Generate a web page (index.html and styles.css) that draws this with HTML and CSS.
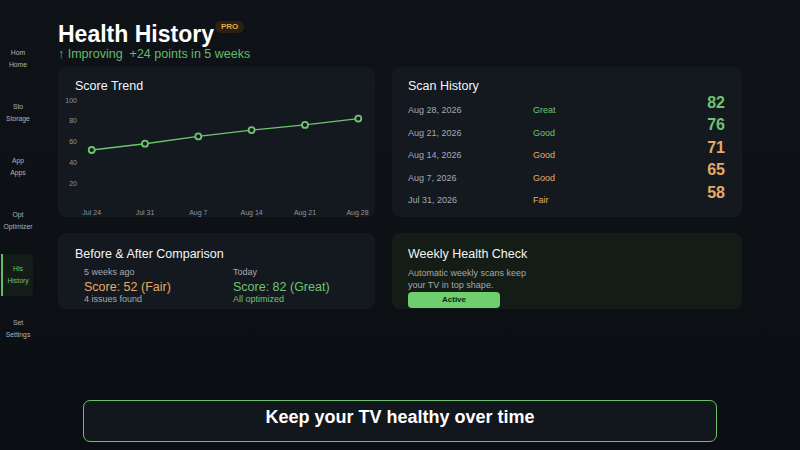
FILE: index.html
```html
<!DOCTYPE html>
<html lang="en">
<head>
  <meta charset="UTF-8">
  <title>Health History</title>
  <link rel="stylesheet" href="styles.css">
</head>
<body>

<div class="app">
  <nav class="sidebar">
    <div class="nav-item"><span>Hom</span><span>Home</span></div>
    <div class="nav-item"><span>Sto</span><span>Storage</span></div>
    <div class="nav-item"><span>App</span><span>Apps</span></div>
    <div class="nav-item"><span>Opt</span><span>Optimizer</span></div>
    <div class="nav-item active"><span>His</span><span>History</span></div>
    <div class="nav-item"><span>Set</span><span>Settings</span></div>
  </nav>

  <main class="main">
    <div class="title-row">
      <h1>Health History</h1>
      <span class="pro">PRO</span>
    </div>
    <div class="subtitle">
      <span>↑ Improving</span>
      <span>+24 points in 5 weeks</span>
    </div>

    <div class="grid">
      <section class="card">
        <h2 class="card-title">Score Trend</h2>
        <svg class="chart" width="317" height="123" viewBox="0 0 317 123">
          <g class="axis">
            <text x="19" y="8.5" text-anchor="end">100</text>
            <text x="19" y="29.2" text-anchor="end">80</text>
            <text x="19" y="49.8" text-anchor="end">60</text>
            <text x="19" y="70.8" text-anchor="end">40</text>
            <text x="19" y="92" text-anchor="end">20</text>
            <text x="33.7" y="120.5" text-anchor="middle">Jul 24</text>
            <text x="87" y="120.5" text-anchor="middle">Jul 31</text>
            <text x="140.3" y="120.5" text-anchor="middle">Aug 7</text>
            <text x="193.6" y="120.5" text-anchor="middle">Aug 14</text>
            <text x="247" y="120.5" text-anchor="middle">Aug 21</text>
            <text x="299.5" y="120.5" text-anchor="middle">Aug 28</text>
          </g>
          <polyline class="line" points="33.7,56 87,49.7 140.3,42.4 193.6,36.1 247,30.9 300.3,24.6"/>
          <g class="dots">
            <circle cx="33.7" cy="56" r="3"/>
            <circle cx="87" cy="49.7" r="3"/>
            <circle cx="140.3" cy="42.4" r="3"/>
            <circle cx="193.6" cy="36.1" r="3"/>
            <circle cx="247" cy="30.9" r="3"/>
            <circle cx="300.3" cy="24.6" r="3"/>
          </g>
        </svg>
      </section>

      <section class="card scan">
        <h2 class="card-title">Scan History</h2>
        <div class="scan-row">
          <span class="date">Aug 28, 2026</span>
          <span class="status green">Great</span>
          <span class="score green">82</span>
        </div>
        <div class="scan-row">
          <span class="date">Aug 21, 2026</span>
          <span class="status green">Good</span>
          <span class="score green">76</span>
        </div>
        <div class="scan-row">
          <span class="date">Aug 14, 2026</span>
          <span class="status orange">Good</span>
          <span class="score orange">71</span>
        </div>
        <div class="scan-row">
          <span class="date">Aug 7, 2026</span>
          <span class="status orange">Good</span>
          <span class="score orange">65</span>
        </div>
        <div class="scan-row">
          <span class="date">Jul 31, 2026</span>
          <span class="status orange">Fair</span>
          <span class="score orange">58</span>
        </div>
      </section>

      <section class="card compare">
        <h2 class="card-title">Before &amp; After Comparison</h2>
        <div class="compare-cols">
          <div>
            <div class="when">5 weeks ago</div>
            <div class="big orange">Score: 52 (Fair)</div>
            <div class="note">4 issues found</div>
          </div>
          <div>
            <div class="when">Today</div>
            <div class="big green">Score: 82 (Great)</div>
            <div class="note green">All optimized</div>
          </div>
        </div>
      </section>

      <section class="card weekly">
        <h2 class="card-title">Weekly Health Check</h2>
        <p class="desc">Automatic weekly scans keep your TV in top shape.</p>
        <div class="active-btn">Active</div>
      </section>
    </div>
  </main>

  <div class="banner">Keep your TV healthy over time</div>
</div>

</body>
</html>
```

FILE: styles.css
```css
body {
  margin: 0;
  font-family: 'Liberation Sans', Arial, sans-serif;
  background: #0c1015;
  color: #f0f2f4;
}

.app {
  position: relative;
  display: flex;
  width: 800px;
  height: 450px;
  overflow: hidden;
  background: linear-gradient(180deg, #0f1318 0%, #0b0e12 100%);
}

.sidebar {
  width: 42px;
  flex-shrink: 0;
  padding-top: 38px;
  display: flex;
  flex-direction: column;
  gap: 12px;
}

.nav-item {
  width: 30px;
  height: 42px;
  margin-left: 1px;
  border-left: 2px solid transparent;
  border-radius: 0 4px 4px 0;
  display: flex;
  flex-direction: column;
  align-items: center;
  justify-content: center;
  font-size: 6.8px;
  line-height: 12px;
  color: #aeb3b9;
}

.nav-item.active {
  border-left-color: #66bb6a;
  background: #141c17;
  color: #6fc46f;
}

.main {
  flex: 1;
  padding: 22px 58px 0 16px;
}

.title-row {
  display: flex;
  align-items: flex-start;
}

h1 {
  margin: 0;
  font-size: 23px;
  line-height: 24px;
  font-weight: bold;
  color: #ffffff;
}

.pro {
  margin: -1px 0 0 1px;
  padding: 0 6px;
  height: 12px;
  line-height: 12px;
  border-radius: 6px;
  background: #2a2112;
  color: #e5a54a;
  font-size: 8px;
  font-weight: bold;
}

.subtitle {
  display: flex;
  gap: 7px;
  margin-top: 1px;
  font-size: 12.5px;
  line-height: 14px;
  color: #66bb6a;
}

.grid {
  margin-top: 6px;
  display: grid;
  grid-template-columns: 317px 350px;
  grid-template-rows: 150px 76px;
  column-gap: 17px;
  row-gap: 16px;
}

.card {
  background: #141920;
  border-radius: 8px;
  overflow: hidden;
}

.card-title {
  margin: 0;
  padding: 12px 17px 0;
  font-size: 12.5px;
  line-height: 15px;
  font-weight: normal;
  color: #f4f5f6;
}

.compare .card-title,
.weekly .card-title {
  padding-top: 13.5px;
}

.chart {
  display: block;
}

.axis text {
  font-family: 'Liberation Sans', Arial, sans-serif;
  font-size: 7px;
  fill: #8f959c;
}

.line {
  fill: none;
  stroke: #6fc46f;
  stroke-width: 1.4;
}

.dots circle {
  fill: #141920;
  stroke: #6fc46f;
  stroke-width: 1.8;
}

.green {
  color: #6fc46f;
}

.orange {
  color: #e8a964;
}

.scan .card-title {
  padding-left: 16px;
  margin-bottom: 5px;
}

.scan-row {
  display: flex;
  align-items: center;
  height: 22.5px;
  padding: 0 17px 0 16px;
  font-size: 9px;
}

.date {
  width: 125px;
  color: #a3a9b0;
}

.status {
  flex: 1;
}

.score {
  margin-top: -15px;
  font-size: 16px;
  line-height: 16px;
  font-weight: bold;
}

.compare-cols {
  display: grid;
  grid-template-columns: 149px 1fr;
  margin: 5px 0 0 26px;
}

.when {
  font-size: 9px;
  line-height: 11px;
  color: #a3a9b0;
}

.big {
  margin-top: 3.5px;
  font-size: 12.5px;
  line-height: 13px;
}

.note {
  font-size: 9px;
  line-height: 10px;
  color: #a3a9b0;
}

.note.green {
  color: #6fc46f;
}

.weekly {
  background: #131c15;
}

.weekly .card-title {
  padding-left: 16px;
}

.desc {
  margin: 5.5px 0 0 16px;
  max-width: 130px;
  font-size: 9px;
  line-height: 12px;
  color: #a3a9b0;
}

.active-btn {
  margin: 0.5px 0 0 16px;
  width: 92px;
  height: 16px;
  line-height: 16px;
  border-radius: 4px;
  background: #6fcf6f;
  color: #0d1a0d;
  font-size: 8px;
  font-weight: 600;
  text-align: center;
}

/* caption laid over the page */
.banner {
  position: absolute;
  left: 83px;
  right: 83px;
  bottom: 8px;
  height: 42px;
  box-sizing: border-box;
  padding-bottom: 8px;
  border: 1px solid #6cbf6c;
  border-radius: 7px;
  background: #12171d;
  color: #ffffff;
  font-size: 18px;
  font-weight: bold;
  line-height: 32px;
  text-align: center;
}
```
